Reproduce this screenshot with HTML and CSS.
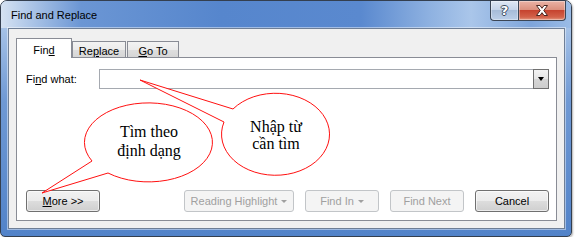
FILE: index.html
```html
<!DOCTYPE html>
<html lang="vi">
<head>
  <meta charset="UTF-8" />
  <title>Find and Replace</title>
  <link rel="stylesheet" href="styles.css">
</head>
<body>
  <div class="window">
    <div class="titlebar">
      <span class="title">Find and Replace</span>
      <div class="caption">
        <span class="cap-btn help">?</span>
        <span class="cap-btn close">
          <svg width="12" height="11" viewBox="0 0 12 11">
            <path d="M0.5 0.5 H4 L6 3.3 L8 0.5 H11.5 L7.8 5.5 L11.5 10.5 H8 L6 7.7 L4 10.5 H0.5 L4.2 5.5 Z" fill="#fff" stroke="#4a2620" stroke-width="1" stroke-linejoin="round"/>
          </svg>
        </span>
      </div>
    </div>

    <div class="client">
      <div class="tabs">
        <div class="tab active">Fin<u>d</u></div>
        <div class="tab">Re<u>p</u>lace</div>
        <div class="tab goto"><u>G</u>o To</div>
      </div>

      <div class="panel">
        <div class="find-row">
          <label class="label">Fi<u>n</u>d what:</label>
          <div class="combo"><span class="drop"></span></div>
        </div>

        <div class="actions">
          <button class="btn"><u>M</u>ore &gt;&gt;</button>
          <span class="spacer"></span>
          <div class="right-group">
            <button class="btn disabled wide">Reading Highlight<span class="caret"></span></button>
            <button class="btn disabled">Find In<span class="caret"></span></button>
            <button class="btn disabled">Find Next</button>
            <button class="btn">Cancel</button>
          </div>
        </div>
      </div>
    </div>

    <!-- annotation callouts drawn over the dialog -->
    <svg class="callouts" width="576" height="240">
      <path class="callout-shape" d="M233 109 A54 41 0 1 1 224 122 L140 80 Z"/>
      <text class="callout-text" x="276" y="132">Nhập từ</text>
      <text class="callout-text" x="276" y="149">cần tìm</text>

      <path class="callout-shape" d="M92 161 A64 39.5 0 1 1 108 173 L42 193 Z"/>
      <text class="callout-text" x="149" y="137">Tìm theo</text>
      <text class="callout-text" x="149" y="156">định dạng</text>
    </svg>
  </div>
</body>
</html>
```

FILE: styles.css
```css
* {
  box-sizing: border-box;
}

body {
  margin: 0;
  background: #fff;
  font-family: "Liberation Sans", Arial, sans-serif;
  font-size: 11px;
  color: #000;
}

.window {
  position: relative;
  width: 572px;
  height: 237px;
  border: 1px solid #343f4f;
  border-radius: 7px 7px 5px 5px;
  background: linear-gradient(to bottom, #c9daef 0, #a3c0e6 30px, #6f99d4 100px, #5283c9 100%);
  box-shadow: 1px 1px 2px rgba(0, 0, 0, 0.3);
  display: flex;
  flex-direction: column;
}

.titlebar {
  height: 27px;
  display: flex;
  justify-content: space-between;
  align-items: flex-start;
  border-radius: 6px 6px 0 0;
  background: linear-gradient(to right, #d5e2f2 0, #b3cae9 25px, #6b96d4 80px, #5686cd 220px, #5a89cf 360px, #8fb2e1 430px, #aac6ea 470px, #7ea5db 530px, #9bbce6 100%);
}

.title {
  padding: 8px 0 0 10px;
  font-size: 11px;
  color: #000;
}

.caption {
  display: flex;
  margin-right: 5px;
}

.cap-btn {
  height: 20px;
  border: 1px solid #3b4656;
  border-top: none;
  display: flex;
  align-items: center;
  justify-content: center;
  box-shadow: inset 0 0 0 1px rgba(255, 255, 255, 0.35);
}

.help {
  width: 28px;
  border-right: none;
  border-radius: 0 0 0 4px;
  background: linear-gradient(#dfe8f4, #c6d5ea 45%, #a7bcd8 50%, #bccfe8);
  color: #fff;
  font-family: "DejaVu Sans", sans-serif;
  font-weight: bold;
  font-size: 13px;
  line-height: 13px;
  text-shadow: 1px 0 0 #3c4b60, -1px 0 0 #3c4b60, 0 1px 0 #3c4b60, 0 -1px 0 #3c4b60;
}

.close {
  width: 48px;
  border-radius: 0 0 4px 0;
  background: linear-gradient(#eab3a6, #dc917f 45%, #c6432f 50%, #d3624a 85%, #e39a83);
}

.client {
  flex: 1;
  margin: 0 6px 7px 7px;
  border: 1px solid #6f7f96;
  background: #f0f0f0;
  padding: 9px 7px 7px 7px;
  display: flex;
  flex-direction: column;
  box-shadow: 0 0 0 1px rgba(255, 255, 255, 0.45);
}

.tabs {
  display: flex;
  align-items: flex-end;
  height: 20px;
  margin-bottom: -1px;
  position: relative;
  z-index: 1;
}

.tab {
  height: 17px;
  width: 54px;
  border: 1px solid #898c95;
  background: linear-gradient(#f3f3f3, #ebebeb 50%, #dedede 50%, #d6d6d6);
  display: flex;
  align-items: flex-end;
  justify-content: center;
  line-height: 11px;
}

.tab.active {
  width: 56px;
  height: 20px;
  background: #fff;
  border-bottom: none;
  padding-bottom: 2px;
}

.tab.goto {
  width: 52px;
  margin-left: 1px;
}

.panel {
  flex: 1;
  border: 1px solid #898c95;
  background: #fff;
  padding: 11px 7px 8px 9px;
  display: flex;
  flex-direction: column;
  justify-content: space-between;
}

.find-row {
  display: flex;
  align-items: center;
  height: 20px;
}

.label {
  width: 73px;
}

.combo {
  flex: 1;
  height: 20px;
  border: 1px solid #a5a9b0;
  display: flex;
  justify-content: flex-end;
}

.drop {
  width: 16px;
  margin: -1px -1px -1px 0;
  border: 1px solid #707070;
  background: linear-gradient(#f3f3f3, #e6e6e6 50%, #d6d6d6 50%, #cdcdcd);
  display: flex;
  align-items: center;
  justify-content: center;
}

.drop::after {
  content: "";
  border-left: 3.5px solid transparent;
  border-right: 3.5px solid transparent;
  border-top: 4px solid #000;
}

.actions {
  display: flex;
  height: 22px;
}

.spacer {
  flex: 1;
}

.right-group {
  display: flex;
  gap: 11px;
}

.btn {
  width: 74px;
  height: 22px;
  padding: 0;
  font-family: inherit;
  font-size: 11px;
  color: #000;
  border: 1px solid #707070;
  border-radius: 3px;
  background: linear-gradient(#f2f2f2, #ebebeb 50%, #dddddd 50%, #cfcfcf);
  box-shadow: inset 0 0 0 1px rgba(255, 255, 255, 0.6);
  display: flex;
  align-items: center;
  justify-content: center;
}

.btn.wide {
  width: 110px;
}

.btn.disabled {
  color: #a0a0a0;
  border-color: #c2c5c8;
  background: #f4f4f4;
  box-shadow: none;
}

.caret {
  display: inline-block;
  margin-left: 4px;
  border-left: 3px solid transparent;
  border-right: 3px solid transparent;
  border-top: 3px solid #a0a0a0;
}

.callouts {
  position: absolute;
  left: -1px;
  top: -1px;
  pointer-events: none;
  z-index: 5;
}

.callout-shape {
  fill: #fff;
  stroke: #ff1010;
  stroke-width: 1;
}

.callout-text {
  font-family: "Liberation Serif", "Times New Roman", serif;
  font-size: 16px;
  text-anchor: middle;
  fill: #000;
}
```
